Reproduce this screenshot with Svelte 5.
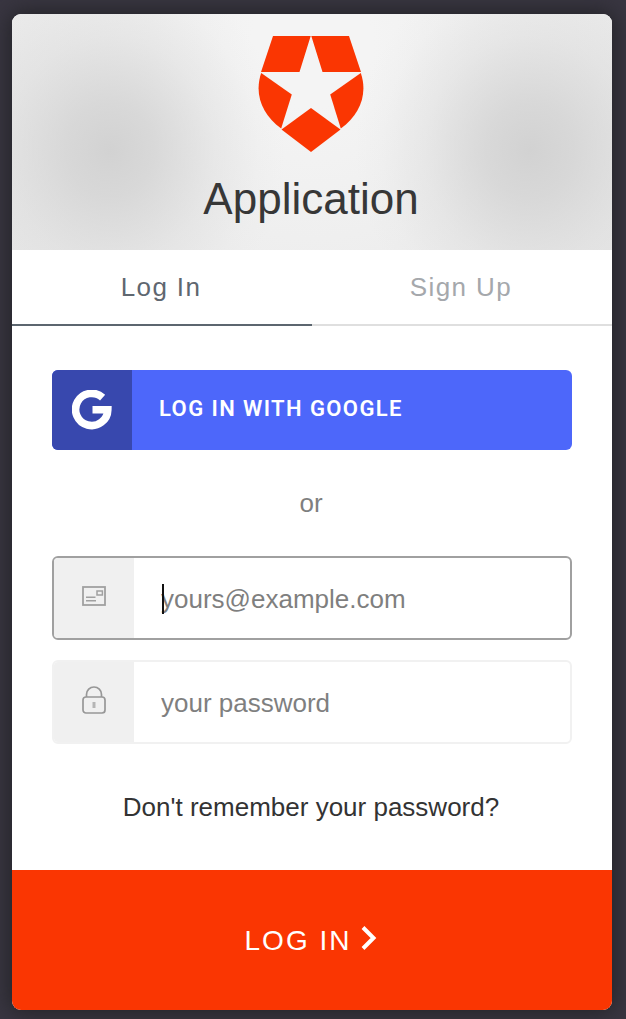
<script>
  let email = $state('');
  let password = $state('');
</script>

<main>
  <section class="card">
    <header>
      <svg class="logo" viewBox="0 0 106 116" width="106" height="116" fill="#fa3602">
        <path d="M15 0H52.7L41.5 36H3Z M53.3 0H91L103 36H64.5Z" />
        <path d="M3.2 37L33.8 58.5L23.2 92.5C4 79-4 58 3.2 37Z" />
        <path d="M102.8 37L72.2 58.5L82.8 92.5C102 79 110 58 102.8 37Z" />
        <path d="M53 72L82.5 93.5L53 116L23.5 93.5Z" />
      </svg>
      <h1>Application</h1>
    </header>

    <nav>
      <button class="tab active">Log In</button>
      <button class="tab">Sign Up</button>
    </nav>

    <div class="content">
      <button class="google">
        <span class="google-icon">
          <svg viewBox="0 0 40 40" width="40" height="40" fill="none" stroke="#fff" stroke-width="7.6">
            <path d="M30.6 7.6A16.1 16.1 0 1 0 35.8 19.8H20.5" stroke-linejoin="miter" />
          </svg>
        </span>
        <span class="google-text">LOG IN WITH GOOGLE</span>
      </button>

      <p class="or">or</p>

      <label class="field focused">
        <span class="field-icon">
          <svg viewBox="0 0 24 20" width="24" height="20" fill="none" stroke="#a0a0a0">
            <rect x="1" y="1" width="22" height="18" stroke-width="1.8" />
            <rect x="15" y="5" width="5.4" height="4" stroke-width="1.5" />
            <path d="M4 11.3H13.5M4 14.8H14" stroke-width="1.4" />
          </svg>
        </span>
        <span class="entry">
          <input type="text" placeholder="yours@example.com" bind:value={email} />
          <i class="caret"></i>
        </span>
      </label>

      <label class="field">
        <span class="field-icon">
          <svg viewBox="0 0 24 28" width="24" height="28" fill="none" stroke="#979797" stroke-width="1.7">
            <rect x="1" y="11" width="22" height="16" rx="3" />
            <path d="M4.5 11V8.5a7.5 7.5 0 0 1 15 0V11" />
            <path d="M12 16V22" stroke="#b5b5b5" stroke-width="3" />
          </svg>
        </span>
        <span class="entry">
          <input type="password" placeholder="your password" bind:value={password} />
        </span>
      </label>

      <a class="forgot" href="#reset">Don't remember your password?</a>
    </div>

    <button class="submit">
      <span>LOG IN</span>
      <svg viewBox="0 0 16 26" width="16" height="26" fill="none" stroke="#fff" stroke-width="4">
        <path d="M2 2.5L12.5 13L2 23.5" />
      </svg>
    </button>
  </section>
</main>

<style>
  :global(body) {
    background: #393641;
  }

  main {
    box-sizing: border-box;
    height: 1019px;
    padding: 14px 14px 9px 12px;
    overflow: hidden;
    font-family: 'Liberation Sans', Arial, sans-serif;
  }

  button {
    border: 0;
    padding: 0;
    font-family: inherit;
  }

  .card {
    display: flex;
    flex-direction: column;
    height: 996px;
    border-radius: 9px;
    overflow: hidden;
    background: #fff;
    box-shadow: 0 0 22px 2px #222226;
  }

  header {
    display: flex;
    flex-direction: column;
    align-items: center;
    box-sizing: border-box;
    height: 236px;
    padding: 22px 2px 0 0;
    background:
      radial-gradient(ellipse 175px 190px at 98px 136px, rgba(207, 207, 207, 0.9) 0%, rgba(209, 209, 209, 0.75) 25%, rgba(212, 212, 212, 0.32) 60%, rgba(216, 216, 216, 0.08) 85%, rgba(220, 220, 220, 0) 100%),
      radial-gradient(ellipse 175px 190px at 518px 136px, rgba(207, 207, 207, 0.9) 0%, rgba(209, 209, 209, 0.75) 25%, rgba(212, 212, 212, 0.32) 60%, rgba(216, 216, 216, 0.08) 85%, rgba(220, 220, 220, 0) 100%),
      radial-gradient(ellipse 400px 420px at 300px 30px, #f4f4f4 15%, #e8e8e8 90%);
  }

  .logo {
    flex: none;
  }

  h1 {
    margin: 22px 0 0;
    font-size: 44px;
    font-weight: 400;
    line-height: 50px;
    color: #373737;
  }

  nav {
    display: flex;
    height: 76px;
    flex: none;
  }

  .tab {
    flex: 1;
    padding-right: 2px;
    background: #fff;
    border-bottom: 2px solid #dfdfdf;
    color: #a5a8ac;
    font-size: 26px;
    letter-spacing: 1.4px;
  }

  .tab.active {
    border-color: #5c666f;
    color: #5f6770;
  }

  .content {
    display: flex;
    flex-direction: column;
    flex: 1;
    padding: 44px 40px 0;
  }

  .google {
    display: flex;
    height: 80px;
    border-radius: 6px;
    overflow: hidden;
    background: #4d67fa;
    color: #fff;
  }

  .google-icon {
    display: flex;
    align-items: center;
    justify-content: center;
    width: 80px;
    height: 80px;
    background: #3848ae;
  }

  .google-text {
    padding-left: 27px;
    font-family: Roboto, sans-serif;
    font-size: 22px;
    font-weight: 600;
    line-height: 77px;
    letter-spacing: 1.4px;
  }

  .or {
    margin: 38px 2px 37px 0;
    text-align: center;
    font-size: 26px;
    line-height: 31px;
    color: #7f7f7f;
  }

  .field {
    display: flex;
    box-sizing: border-box;
    height: 84px;
    margin-bottom: 20px;
    border: 2px solid #f1f1f1;
    border-radius: 6px;
    overflow: hidden;
  }

  .field.focused {
    border-color: #a0a0a0;
  }

  .field-icon {
    display: flex;
    align-items: center;
    justify-content: center;
    box-sizing: border-box;
    width: 80px;
    padding-bottom: 4px;
    background: #f0f0f0;
  }

  .entry {
    position: relative;
    display: flex;
    flex: 1;
    padding-left: 27px;
  }

  input {
    width: 100%;
    padding: 2px 0 0;
    border: 0;
    outline: 0;
    background: transparent;
    font-family: inherit;
    font-size: 26px;
  }

  input::placeholder {
    color: #7f7f7f;
  }

  .caret {
    position: absolute;
    left: 28px;
    top: 26px;
    width: 2px;
    height: 30px;
    background: #111;
  }

  .forgot {
    margin: 27px 2px 0 0;
    text-align: center;
    font-size: 26px;
    line-height: 32px;
    color: #333;
    text-decoration: none;
  }

  .submit {
    display: flex;
    flex: none;
    align-items: center;
    justify-content: center;
    gap: 10px;
    height: 140px;
    padding: 2px 2px 0 0;
    background: #fa3602;
    color: #fff;
    font-size: 28px;
    letter-spacing: 2px;
  }

  .submit svg {
    margin-bottom: 6px;
  }
</style>
